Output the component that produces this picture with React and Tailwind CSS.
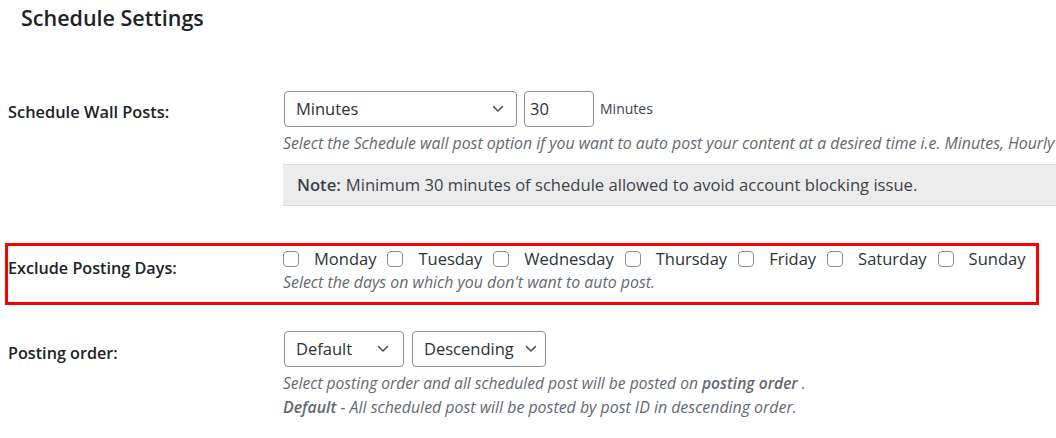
import React from "react";

const Chevron = () => (
  <svg width="16" height="16" viewBox="0 0 20 20" className="shrink-0">
    <path d="M4.5 7 L10 12.5 L15.5 7" fill="none" stroke="#50575e" strokeWidth="2" strokeLinecap="round" strokeLinejoin="round" />
  </svg>
);

function Select({ label, w, pr = "pr-[10px]" }) {
  return (
    <div className={`flex items-center justify-between h-[36px] border border-[#8c8f94] rounded-[4px] bg-white pl-[11px] ${pr} text-[16.5px] text-[#2c3338] ${w}`}>
      <span>{label}</span>
      <Chevron />
    </div>
  );
}

const days = ["Monday", "Tuesday", "Wednesday", "Thursday", "Friday", "Saturday", "Sunday"];

export default function App() {
  return (
    <div className="w-[1056px] h-[438px] overflow-hidden bg-white text-[#1d2327]" style={{ fontFamily: '"Open Sans", "Noto Sans", sans-serif' }}>
      <h1 className="pl-[21px] pt-[3px] text-[21.5px] font-semibold leading-[30px]">Schedule Settings</h1>

      {/* Row 1 */}
      <div className="flex mt-[58px]">
        <div className="w-[283px] pl-[8px] pt-[9px] text-[16.4px] font-semibold">Schedule Wall Posts:</div>
        <div className="flex-1 min-w-0">
          <div className="flex items-center">
            <div className="ml-[1px]"><Select label="Minutes" w="w-[233px]" pr="pr-[10px]" /></div>
            <div className="ml-[7px] w-[70px] h-[36px] border border-[#8c8f94] rounded-[4px] flex items-center pl-[5px] text-[16.5px] text-[#2c3338]">30</div>
            <div className="ml-[6px] self-start pt-[7px] text-[14px] text-[#3c434a]">Minutes</div>
          </div>
          <p className="mt-[5px] text-[15.85px] leading-[23px] italic text-[#646970] whitespace-nowrap">Select the Schedule wall post option if you want to auto post your content at a desired time i.e. Minutes, Hourly</p>
          <div className="mt-[9px] h-[42px] bg-[#ececec] border-y border-[#dcdcde] flex items-center pl-[14px] text-[16.6px] text-[#3c434a] whitespace-nowrap">
            <b className="font-semibold mr-[5px]">Note:</b> Minimum 30 minutes of schedule allowed to avoid account blocking issue.
          </div>
        </div>
      </div>

      {/* Row 2 highlighted */}
      <div className="mt-[37px] ml-[5px] w-[1034px] h-[62px] border-[3px] border-[#ff0000] flex">
        <div className="w-[275px] pt-[10px] text-[16.2px] font-semibold">Exclude Posting Days:</div>
        <div className="flex-1 min-w-0">
          <div className="flex items-center mt-[2px] h-[22px]">
            {days.map((d, i) => (
              <div key={d} className={`flex items-center ${i ? "ml-[11px]" : ""}`}>
                <span className="w-[16px] h-[16px] border border-[#8c8f94] rounded-[4px] bg-white" />
                <span className="ml-[15px] text-[16.5px] text-[#2c3338]">{d}</span>
              </div>
            ))}
          </div>
          <p className="mt-[1px] text-[15.9px] leading-[23px] italic text-[#646970] whitespace-nowrap">Select the days on which you don't want to auto post.</p>
        </div>
      </div>

      {/* Row 3 */}
      <div className="flex mt-[26px]">
        <div className="w-[283px] pl-[8px] pt-[10px] text-[16.2px] font-semibold">Posting order:</div>
        <div className="flex-1 min-w-0">
          <div className="flex items-center ml-[1px] gap-[8px]">
            <Select label="Default" w="w-[120px]" pr="pr-[12px]" />
            <Select label="Descending" w="w-[134px]" pr="pr-[6px]" />
          </div>
          <p className="mt-[4px] text-[15.6px] italic text-[#646970] whitespace-nowrap leading-[24px]">Select posting order and all scheduled post will be posted on <b className="font-semibold italic">posting order</b> .</p>
          <p className="text-[15.9px] italic text-[#646970] whitespace-nowrap leading-[24px]"><b className="font-semibold italic">Default</b> - All scheduled post will be posted by post ID in descending order.</p>
        </div>
      </div>
    </div>
  );
}
